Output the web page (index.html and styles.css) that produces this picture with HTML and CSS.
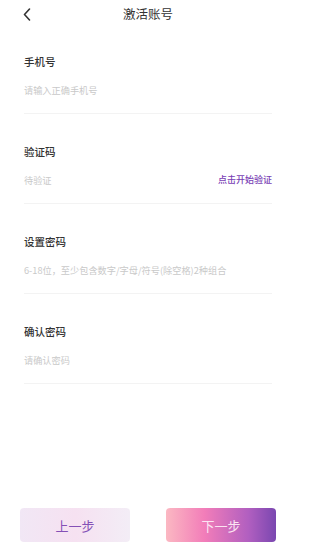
FILE: index.html
```html
<!DOCTYPE html>
<html lang="zh-CN">
<head>
  <meta charset="UTF-8" />
  <meta name="viewport" content="width=device-width, initial-scale=1.0"/>
  <title>激活账号</title>
  <link rel="stylesheet" href="styles.css">
</head>
<body>
  <div class="page">
    <!-- 顶部导航 -->
    <div class="header">
      <span class="back">
        <svg width="8" height="13" viewBox="0 0 8 13"><path d="M6.5 1 L1.5 6.5 L6.5 12" fill="none" stroke="#333" stroke-width="1.6" stroke-linecap="round" stroke-linejoin="round"/></svg>
      </span>
      <h1 class="title">激活账号</h1>
    </div>

    <!-- 表单 -->
    <div class="form">
      <div class="field">
        <div class="label">手机号</div>
        <div class="row"><span class="placeholder">请输入正确手机号</span></div>
      </div>
      <div class="field">
        <div class="label">验证码</div>
        <div class="row">
          <span class="placeholder">待验证</span>
          <span class="verify">点击开始验证</span>
        </div>
      </div>
      <div class="field">
        <div class="label">设置密码</div>
        <div class="row"><span class="placeholder">6-18位，至少包含数字/字母/符号(除空格)2种组合</span></div>
      </div>
      <div class="field">
        <div class="label">确认密码</div>
        <div class="row"><span class="placeholder">请确认密码</span></div>
      </div>
    </div>

    <!-- 底部按钮 -->
    <div class="footer">
      <button class="btn-prev">上一步</button>
      <button class="btn-next">下一步</button>
    </div>
  </div>
</body>
</html>
```

FILE: styles.css
```css
* {
  box-sizing: border-box;
}

body {
  margin: 0;
  font-family: "Noto Sans CJK SC", "Noto Sans", sans-serif;
  background-color: #fff;
  color: #333;
}

.page {
  display: flex;
  flex-direction: column;
  min-height: 100vh;
}

.header {
  position: relative;
  height: 28px;
  display: flex;
  align-items: center;
  justify-content: center;
  padding: 0 37px 0 24px;
}

.back {
  position: absolute;
  left: 23px;
  top: 8px;
  display: flex;
}

.title {
  margin: 0;
  font-size: 12.5px;
  font-weight: 400;
  color: #333;
  line-height: 28px;
}

.form {
  padding: 0 37px 0 24px;
}

.field {
  padding-top: 26px;
  padding-bottom: 16px;
  margin-bottom: 4px;
  border-bottom: 1px solid #f3f3f3;
}

.label {
  font-size: 10.5px;
  font-weight: 500;
  line-height: 16px;
  color: #333;
}

.row {
  display: flex;
  justify-content: space-between;
  align-items: center;
  margin-top: 13px;
  line-height: 14px;
}

.placeholder {
  font-size: 9.2px;
  color: #c9c9c9;
}

.verify {
  font-size: 9px;
  font-weight: 500;
  color: #7a3fb5;
}

.footer {
  margin-top: auto;
  display: flex;
  gap: 36px;
  padding-left: 20px;
}

.btn-prev,
.btn-next {
  width: 110px;
  height: 34px;
  border: none;
  border-radius: 4px;
  font-family: inherit;
  font-size: 13px;
  cursor: pointer;
}

.btn-prev {
  background: linear-gradient(90deg, #f1e7f5 0%, #f6e1f1 50%, #f3edf6 100%);
  color: #8450b6;
}

.btn-next {
  background: linear-gradient(90deg, #fbb8c2 0%, #f27db9 35%, #b15fc0 75%, #7a47b0 100%);
  color: #fbe4f2;
}
```
